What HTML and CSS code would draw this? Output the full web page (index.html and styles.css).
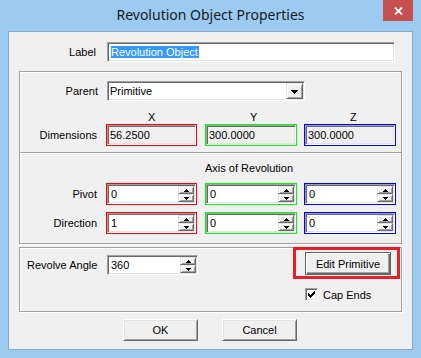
FILE: index.html
```html
<!DOCTYPE html>
<html>
<head>
<meta charset="utf-8">
<link rel="stylesheet" href="styles.css">
</head>
<body>
<div class="window">
  <div class="titlebar">
    <span></span>
    <div class="title">Revolution Object Properties</div>
    <div class="close"><svg width="9" height="8" viewBox="0 0 9 8"><path d="M1 0.5L8 7.5M8 0.5L1 7.5" stroke="#fff" stroke-width="1.8"/></svg></div>
  </div>
  <div class="client">
    <div class="label-row">
      <span class="lbl lbl-main">Label</span>
      <div class="edit sunken label-edit"><span class="sel">Revolution Object</span></div>
    </div>

    <div class="group group-a">
      <div class="cols parent-row">
        <span class="lbl">Parent</span>
        <div class="combo sunken">
          <span class="combo-text">Primitive</span>
          <span class="combo-btn raised"><svg width="7" height="4" viewBox="0 0 7 4"><path d="M0 0h7v1H6v1H5v1H4v1H3V3H2V2H1V1H0z" fill="#000"/></svg></span>
        </div>
      </div>
      <div class="cols axis-row">
        <span></span>
        <span class="ax ax-x">X</span>
        <span class="ax ax-y">Y</span>
        <span class="ax ax-z">Z</span>
      </div>
      <div class="cols field-row">
        <span class="lbl">Dimensions</span>
        <div class="frame red w91"><div class="edit sunken ro">56.2500</div></div>
        <div class="frame green w92"><div class="edit sunken ro">300.0000</div></div>
        <div class="frame blue w92"><div class="edit sunken ro">300.0000</div></div>
      </div>
      <div class="separator"></div>
      <div class="cols aor-row">
        <span></span><span></span>
        <span class="aor">Axis of Revolution</span>
      </div>
      <div class="cols field-row pivot-row">
        <span class="lbl">Pivot</span>
        <div class="frame red w91"><div class="edit sunken spin"><span class="val">0</span><span class="spinner"><span class="sp-btn raised"><svg width="5" height="3" viewBox="0 0 5 3"><path d="M2 0h1v1h1v1h1v1H0V2h1V1h1z"/></svg></span><span class="sp-btn raised"><svg width="5" height="3" viewBox="0 0 5 3"><path d="M0 0h5v1H4v1H3v1H2V2H1V1H0z"/></svg></span></span></div></div>
        <div class="frame green w92"><div class="edit sunken spin"><span class="val">0</span><span class="spinner"><span class="sp-btn raised"><svg width="5" height="3" viewBox="0 0 5 3"><path d="M2 0h1v1h1v1h1v1H0V2h1V1h1z"/></svg></span><span class="sp-btn raised"><svg width="5" height="3" viewBox="0 0 5 3"><path d="M0 0h5v1H4v1H3v1H2V2H1V1H0z"/></svg></span></span></div></div>
        <div class="frame blue w92"><div class="edit sunken spin"><span class="val">0</span><span class="spinner"><span class="sp-btn raised"><svg width="5" height="3" viewBox="0 0 5 3"><path d="M2 0h1v1h1v1h1v1H0V2h1V1h1z"/></svg></span><span class="sp-btn raised"><svg width="5" height="3" viewBox="0 0 5 3"><path d="M0 0h5v1H4v1H3v1H2V2H1V1H0z"/></svg></span></span></div></div>
      </div>
      <div class="cols field-row dir-row">
        <span class="lbl">Direction</span>
        <div class="frame red w91"><div class="edit sunken spin"><span class="val">1</span><span class="spinner"><span class="sp-btn raised"><svg width="5" height="3" viewBox="0 0 5 3"><path d="M2 0h1v1h1v1h1v1H0V2h1V1h1z"/></svg></span><span class="sp-btn raised"><svg width="5" height="3" viewBox="0 0 5 3"><path d="M0 0h5v1H4v1H3v1H2V2H1V1H0z"/></svg></span></span></div></div>
        <div class="frame green w92"><div class="edit sunken spin"><span class="val">0</span><span class="spinner"><span class="sp-btn raised"><svg width="5" height="3" viewBox="0 0 5 3"><path d="M2 0h1v1h1v1h1v1H0V2h1V1h1z"/></svg></span><span class="sp-btn raised"><svg width="5" height="3" viewBox="0 0 5 3"><path d="M0 0h5v1H4v1H3v1H2V2H1V1H0z"/></svg></span></span></div></div>
        <div class="frame blue w92"><div class="edit sunken spin"><span class="val">0</span><span class="spinner"><span class="sp-btn raised"><svg width="5" height="3" viewBox="0 0 5 3"><path d="M2 0h1v1h1v1h1v1H0V2h1V1h1z"/></svg></span><span class="sp-btn raised"><svg width="5" height="3" viewBox="0 0 5 3"><path d="M0 0h5v1H4v1H3v1H2V2H1V1H0z"/></svg></span></span></div></div>
      </div>
    </div>

    <div class="group group-b">
      <div class="revolve">
        <span class="lbl-left">Revolve Angle</span>
        <div class="edit sunken spin revolve-edit"><span class="val">360</span><span class="spinner"><span class="sp-btn raised"><svg width="5" height="3" viewBox="0 0 5 3"><path d="M2 0h1v1h1v1h1v1H0V2h1V1h1z"/></svg></span><span class="sp-btn raised"><svg width="5" height="3" viewBox="0 0 5 3"><path d="M0 0h5v1H4v1H3v1H2V2H1V1H0z"/></svg></span></span></div>
      </div>
      <div class="right-col">
        <div class="redbox"><div class="btn default">Edit Primitive</div></div>
        <div class="check-row">
          <span class="checkbox sunken"><svg width="7" height="7" viewBox="0 0 7 7"><path d="M6 0h1v3H6v1H5v1H4v1H3v1H2V6H1V5H0V2h1v1h1v1h1V3h1V2h1V1h1z" fill="#000"/></svg></span>
          <span>Cap Ends</span>
        </div>
      </div>
    </div>

    <div class="buttons">
      <div class="btn">OK</div>
      <div class="btn">Cancel</div>
    </div>
  </div>
</div>
</body>
</html>
```

FILE: styles.css
```css
* { box-sizing: border-box; }

body {
  margin: 0;
  background: #9ccbf2;
  font-family: "Liberation Sans", Arial, sans-serif;
  font-size: 11px;
  color: #000;
}

.window {
  width: 421px;
  height: 358px;
  background: #9ccbf2;
  padding: 0 8px;
}

.titlebar {
  height: 31px;
  display: grid;
  grid-template-columns: 1fr auto 1fr;
}

.title {
  font-family: "Noto Sans", "Open Sans", sans-serif;
  font-size: 14px;
  line-height: 29px;
  color: #1a1a1a;
  white-space: nowrap;
}

.close {
  justify-self: end;
  width: 30px;
  height: 21px;
  background: #c75050;
  display: flex;
  align-items: center;
  justify-content: center;
}

.client {
  background: #f0f0f0;
  border: 1px solid #88a9c8;
  padding-bottom: 8px;
}

.lbl { text-align: right; padding-right: 9px; white-space: nowrap; }

.label-row {
  display: flex;
  align-items: center;
  margin-top: 10px;
}
.lbl-main { width: 88px; padding-right: 1px; }

.sunken {
  border: 1px solid;
  border-color: #a0a0a0 #fff #fff #a0a0a0;
  box-shadow: inset 1px 1px #696969, inset -1px -1px #e3e3e3;
  background: #fff;
}

.raised {
  background: #f0f0f0;
  border: 1px solid;
  border-color: #e3e3e3 #696969 #696969 #e3e3e3;
  box-shadow: inset 1px 1px #fff, inset -1px -1px #a0a0a0;
}

.edit {
  display: flex;
  align-items: center;
  height: 100%;
  padding: 1px 1px 1px 3px;
  white-space: nowrap;
}

.label-edit {
  margin-left: 10px;
  width: 288px;
  height: 20px;
}

.sel {
  background: #3399ff;
  color: #fff;
  line-height: 12px;
  padding: 0 1px 0 0;
}

.group {
  margin-left: 10px;
  width: 383px;
  border: 1px solid #a0a0a0;
  box-shadow: inset 1px 1px #fff, 1px 1px #fff;
}

.group-a {
  margin-top: 9px;
  padding-top: 9px;
  padding-bottom: 9px;
}

.cols {
  display: grid;
  grid-template-columns: 86px 99px 99px 92px;
  align-items: center;
}

.parent-row { height: 20px; }
.parent-row .lbl { padding-right: 8px; }

.combo {
  grid-column: 2 / span 2;
  margin-left: 1px;
  width: 198px;
  height: 20px;
  display: flex;
  align-items: center;
  padding: 1px 1px 1px 2px;
}
.combo-text { flex: 1; }
.combo-btn {
  width: 17px;
  height: 16px;
  display: flex;
  align-items: center;
  justify-content: center;
  padding-top: 1px;
}

.axis-row { margin-top: 9px; height: 14px; line-height: 14px; }
.ax { text-align: left; }
.ax-x { padding-left: 42px; }
.ax-y { padding-left: 45px; }
.ax-z { padding-left: 46px; }

.field-row { height: 22px; }
.pivot-row { margin-top: 8px; }
.dir-row { margin-top: 7px; }

.frame {
  height: 22px;
  border: 1px solid;
}
.w91 { width: 91px; }
.w92 { width: 92px; }
.red { border-color: #ff0000; }
.green { border-color: #00ff00; }
.blue { border-color: #0000ff; }

.ro { background: #f0f0f0; padding-left: 2px; }

.separator {
  margin-top: 6px;
  height: 2px;
  border-top: 1px solid #a0a0a0;
  border-bottom: 1px solid #fff;
}

.aor-row { margin-top: 7px; height: 14px; line-height: 14px; }
.aor { white-space: nowrap; }

.spin { padding-right: 1px; }
.val { flex: 1; }
.spinner {
  width: 16px;
  height: 16px;
  display: flex;
  flex-direction: column;
}
.sp-btn {
  height: 8px;
  display: flex;
  align-items: center;
  justify-content: center;
}
.sp-btn svg { display: block; }

.group-b {
  margin-top: 3px;
  display: flex;
  align-items: flex-start;
  padding-bottom: 10px;
}

.revolve {
  display: flex;
  align-items: center;
  margin-top: 7px;
}
.lbl-left {
  width: 87px;
  padding-left: 7px;
  white-space: nowrap;
}
.revolve-edit {
  width: 91px;
  height: 20px;
}

.right-col {
  margin-left: 95px;
  margin-top: -1px;
  display: flex;
  flex-direction: column;
}

.redbox {
  width: 107px;
  height: 32px;
  border: 3px solid #e81d25;
  padding: 2px 0 0 9px;
}

.btn {
  height: 22px;
  width: 75px;
  display: flex;
  align-items: center;
  justify-content: center;
  background: #f0f0f0;
  border: 1px solid;
  border-color: #fff #696969 #696969 #fff;
  box-shadow: inset 1px 1px #e3e3e3, inset -1px -1px #a0a0a0;
}

.btn.default {
  width: 86px;
  height: 23px;
  border: 1px solid #646464;
  box-shadow: inset 1px 1px #fff, inset -1px -1px #696969, inset -2px -2px #a0a0a0;
}

.check-row {
  margin-top: 9px;
  margin-left: 12px;
  display: flex;
  align-items: center;
  gap: 5px;
  height: 13px;
}
.checkbox {
  width: 13px;
  height: 13px;
  display: flex;
  align-items: center;
  justify-content: center;
}
.checkbox svg { display: block; }

.buttons {
  margin-top: 7px;
  display: flex;
  justify-content: center;
  gap: 24px;
  padding-right: 1px;
}
```
